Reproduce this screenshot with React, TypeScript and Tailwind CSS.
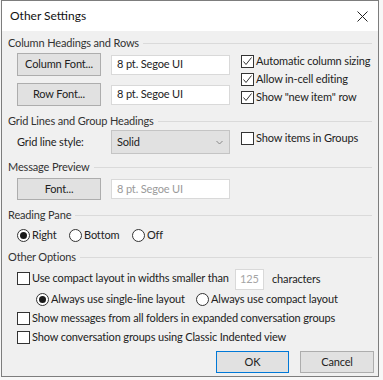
import React from 'react';

const T = 'text-[11px] tracking-[-0.15px]';

const GroupHeader: React.FC<{ label: string; className?: string }> = ({ label, className = '' }) => (
    <div className={`h-[16px] flex items-center pl-[6px] pr-[6px] ${className}`}>
        <span className={`${T} text-[#333] whitespace-nowrap`}>{label}</span>
        <div className="flex-1 h-px bg-[#dadada] ml-[4px]" />
    </div>
);

const Btn: React.FC<{ label: string; primary?: boolean; w?: string; h?: string }> = ({ label, primary, w = 'w-[84px]', h = 'h-[23px]' }) => (
    <div
        className={`${w} ${h} flex items-center justify-center ${T} text-[#222] bg-[#e1e1e1] border ${
            primary ? 'border-[#0078d7]' : 'border-[#adadad]'
        }`}
    >
        {label}
    </div>
);

const TextBox: React.FC<{ value: string; disabled?: boolean }> = ({ value, disabled }) => (
    <div
        className={`w-[119px] h-[20px] bg-white border border-[#d9d9d9] pl-[5px] flex items-center ${T} ${
            disabled ? 'text-[#9a9a9a]' : 'text-[#222]'
        }`}
    >
        {value}
    </div>
);

const CheckBox: React.FC<{ checked?: boolean }> = ({ checked }) => (
    <div className="w-[13px] h-[13px] shrink-0 border border-[#333] bg-white flex items-center justify-center">
        {checked && (
            <svg width="11" height="11" viewBox="0 0 11 11">
                <path d="M1.5 5.5 L4 8.5 L9.5 1.5" fill="none" stroke="#333" strokeWidth="1" />
            </svg>
        )}
    </div>
);

const Radio: React.FC<{ checked?: boolean }> = ({ checked }) => (
    <div className="w-[13px] h-[13px] shrink-0 rounded-full border border-[#333] bg-white flex items-center justify-center">
        {checked && <div className="w-[7px] h-[7px] rounded-full bg-[#1a1a1a]" />}
    </div>
);

const CheckRow: React.FC<{ label: string; checked?: boolean }> = ({ label, checked }) => (
    <div className="h-[18px] flex items-center">
        <CheckBox checked={checked} />
        <span className={`ml-[2px] ${T} text-[#222] whitespace-nowrap`}>{label}</span>
    </div>
);

const RadioItem: React.FC<{ label: string; checked?: boolean; className?: string }> = ({ label, checked, className = '' }) => (
    <div className={`flex items-center ${className}`}>
        <Radio checked={checked} />
        <span className={`ml-[2px] ${T} text-[#222] whitespace-nowrap`}>{label}</span>
    </div>
);

export default function App() {
    return (
        <div className="w-[383px] h-[380px] bg-[#f7f7f7] [font-family:Lato,sans-serif]">
            <div className="ml-[1px] w-[378px] h-[377px] border border-[#7d7d7d] flex flex-col">
                {/* Title bar */}
                <div className="h-[30px] bg-white flex items-center justify-between pl-[8px] pr-[10px]">
                    <span className="text-[12px] text-[#111]">Other Settings</span>
                    <svg width="11" height="11" viewBox="0 0 11 11">
                        <path d="M0.5 0.5 L10.5 10.5 M10.5 0.5 L0.5 10.5" stroke="#222" strokeWidth="1" />
                    </svg>
                </div>

                {/* Body */}
                <div className="flex-1 bg-[#f0f0f0] flex flex-col">
                    <GroupHeader label="Column Headings and Rows" className="mt-[4px]" />
                    <div className="flex mt-[2px] pl-[15px]">
                        <div className="flex flex-col gap-[7px]">
                            <div className="flex items-center gap-[10px]">
                                <Btn label="Column Font..." />
                                <TextBox value="8 pt. Segoe UI" />
                            </div>
                            <div className="flex items-center gap-[10px]">
                                <Btn label="Row Font..." />
                                <TextBox value="8 pt. Segoe UI" />
                            </div>
                        </div>
                        <div className="ml-[11px] -mt-[1px] flex flex-col">
                            <CheckRow label="Automatic column sizing" checked />
                            <CheckRow label="Allow in-cell editing" checked />
                            <CheckRow label={'Show "new item" row'} checked />
                        </div>
                    </div>

                    <GroupHeader label="Grid Lines and Group Headings" className="mt-[7px]" />
                    <div className="flex mt-[1px] pl-[15px] h-[24px]">
                        <div className={`w-[94px] flex items-center ${T} text-[#222]`}>Grid line style:</div>
                        <div className={`w-[119px] h-[24px] bg-[#e1e1e1] border border-[#c4c4c4] flex items-center justify-between pl-[5px] pr-[6px] ${T} text-[#222]`}>
                            <span>Solid</span>
                            <svg width="7" height="5" viewBox="0 0 7 5">
                                <path d="M0.5 1 L3.5 4 L6.5 1" fill="none" stroke="#888" strokeWidth="1" />
                            </svg>
                        </div>
                        <div className="ml-[11px] mt-[-1px] h-[18px] flex items-center">
                            <CheckBox />
                            <span className={`ml-[2px] ${T} text-[#222] whitespace-nowrap`}>Show items in Groups</span>
                        </div>
                    </div>

                    <GroupHeader label="Message Preview" className="mt-[5px]" />
                    <div className="flex items-center gap-[10px] mt-[3px] pl-[15px]">
                        <Btn label="Font..." h="h-[22px]" />
                        <TextBox value="8 pt. Segoe UI" disabled />
                    </div>

                    <GroupHeader label="Reading Pane" className="mt-[7px]" />
                    <div className="flex items-center h-[16px] mt-[4px] pl-[15px]">
                        <RadioItem label="Right" checked className="w-[52px]" />
                        <RadioItem label="Bottom" className="w-[63px]" />
                        <RadioItem label="Off" />
                    </div>

                    <GroupHeader label="Other Options" className="mt-[6px]" />
                    <div className="flex items-center h-[21px] mt-[4px] pl-[15px]">
                        <div className="flex items-center -mt-[2px] w-[218px]">
                            <CheckBox />
                            <span className={`ml-[2px] ${T} text-[#222] whitespace-nowrap`}>Use compact layout in widths smaller than</span>
                        </div>
                        <div className={`w-[29px] h-[21px] bg-white border border-[#d9d9d9] pl-[4px] flex items-center ${T} text-[#a5a5a5]`}>125</div>
                        <span className={`ml-[8px] ${T} text-[#222]`}>characters</span>
                    </div>
                    <div className="flex items-center h-[16px] mt-[1px] pl-[34px]">
                        <RadioItem label="Always use single-line layout" checked className="w-[160px]" />
                        <RadioItem label="Always use compact layout" />
                    </div>
                    <div className="h-[16px] mt-[3px] pl-[15px] flex items-center">
                        <CheckBox />
                        <span className={`ml-[2px] ${T} text-[#222] whitespace-nowrap`}>Show messages from all folders in expanded conversation groups</span>
                    </div>
                    <div className="h-[16px] mt-[3px] pl-[15px] flex items-center">
                        <CheckBox />
                        <span className={`ml-[2px] ${T} text-[#222] whitespace-nowrap`}>Show conversation groups using Classic Indented view</span>
                    </div>

                    <div className="flex justify-end gap-[11px] mt-[6px] pr-[4px]">
                        <Btn label="OK" primary w="w-[73px]" h="h-[22px]" />
                        <Btn label="Cancel" w="w-[74px]" h="h-[22px]" />
                    </div>
                </div>
            </div>
        </div>
    );
}
